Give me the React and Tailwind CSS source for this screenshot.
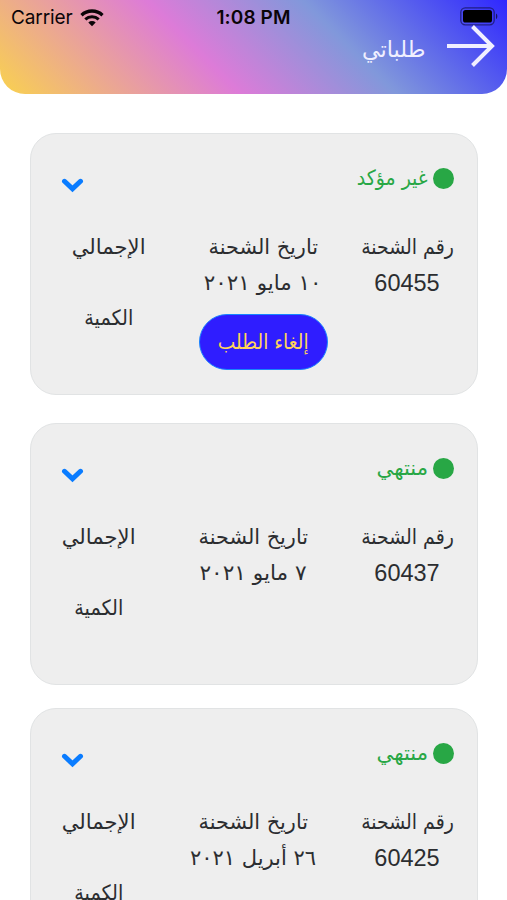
const AR = "font-['DejaVu_Sans',sans-serif]";

function Label({ children, width, scale, color = 'text-[#2b2d30]' }) {
  return (
    <div className={`${width} h-[36px] flex justify-center items-center`}>
      <span className={`${AR} text-[21px] ${color} ${scale} whitespace-nowrap leading-[36px]`}>{children}</span>
    </div>
  );
}

function Header() {
  return (
    <header className="h-[94px] rounded-b-[25px] overflow-hidden bg-[linear-gradient(45deg,#f9d24e_0%,#dd7bd8_40%,#8198db_66%,#2f27ff_100%)]">
      <div dir="ltr" className="h-[28px] pt-[5px] flex justify-between items-start text-[#0b0508] font-['Inter',sans-serif] leading-6">
        <div className="w-[170px] pl-[11px] flex items-center gap-[7px] text-[19px]">
          <span className="pt-px tracking-[-0.1px]">Carrier</span>
          <svg width="24" height="18" viewBox="0 0 24 18" fill="none" stroke="currentColor">
            <path d="M1.500 6.200a15.200 15.200 0 0 1 21 0" strokeWidth="3.300" />
            <path d="M5.300 10.300a9.800 9.800 0 0 1 13.400 0" strokeWidth="3" />
            <path d="M12 17.200l-3.700-3.800a5.400 5.400 0 0 1 7.400 0z" fill="currentColor" stroke="none" />
          </svg>
        </div>
        <div className="pt-px text-[19px] font-semibold whitespace-nowrap tracking-[0.1px]">1:08 PM</div>
        <div className="w-[170px] pr-[9px] pt-[2px] flex justify-end">
          <svg width="38" height="19" viewBox="0 0 38 19">
            <rect x="0.8" y="0.8" width="33.4" height="17" rx="4.5" fill="none" stroke="#17145f" strokeOpacity=".75" strokeWidth="1.3" />
            <rect x="3" y="3" width="29" height="12.6" rx="2.6" fill="#000" />
            <path d="M36 6.5c1.8.8 1.8 4.8 0 5.6z" fill="#17145f" />
          </svg>
        </div>
      </div>
      <div className="h-[44px] pr-[12px] flex justify-start items-start gap-[21px] text-[#f0efff]">
        <svg className="-mt-[4px]" width="49" height="44" viewBox="0 0 49 44" fill="none" stroke="currentColor" strokeWidth="4">
          <path d="M1 22h45" />
          <path d="M26.500 2.500L46 22L26.500 41.500" />
        </svg>
        <span className={`${AR} text-[23px] leading-[42px] scale-x-[.97] origin-right whitespace-nowrap`}>طلباتي</span>
      </div>
    </header>
  );
}

function OrderCard({ status, statusScale, number, date, dateScale, cancellable }) {
  return (
    <article className="h-[262px] shrink-0 rounded-[26px] border-[1.5px] border-[#e1e3e4] bg-[#eeeeee] pt-[29px]">
      <div className="h-[66px] pr-[23px] pl-[30px] flex justify-between items-start">
        <div className="flex items-center gap-[5px] h-[30px]">
          <span className="size-[21px] rounded-full bg-[#28a745]" />
          <span className={`${AR} text-[21px] leading-[30px] text-[#28a745] ${statusScale} origin-right whitespace-nowrap`}>{status}</span>
        </div>
        <svg className="mt-[15px]" width="23" height="16" viewBox="0 0 23 16" fill="none" stroke="#0a7cff" strokeWidth="5" strokeLinecap="round">
          <path d="M3.500 3.300l8 7.500l8-7.500" />
        </svg>
      </div>
      <div className={`flex pr-[22px] ${cancellable ? 'gap-[32px]' : 'gap-[42px]'}`}>
        <div className="w-[96px] shrink-0">
          <Label width="w-[96px]" scale="scale-x-90">رقم الشحنة</Label>
          <div className="h-[36px] flex justify-center items-center text-[23.5px] leading-[36px] text-[#2b2d30] font-['Liberation_Sans',sans-serif]">{number}</div>
        </div>
        <div className="w-[128px] shrink-0 flex flex-col items-center">
          <Label width="w-[128px]" scale="scale-x-[.99]">تاريخ الشحنة</Label>
          <Label width="w-[128px]" scale={dateScale}>{date}</Label>
          {cancellable && (
            <button className="mt-[13px] w-[129px] h-[56px] shrink-0 rounded-full border-[1.5px] border-[#1785ff] bg-[#2f1dff] flex items-center justify-center">
              <Label width="w-[100px]" scale="scale-x-[.89]" color="text-[#ffd55a]">إلغاء الطلب</Label>
            </button>
          )}
        </div>
        <div className={`w-[78px] shrink-0 ${cancellable ? 'mr-[19px]' : 'mr-[9px]'}`}>
          <Label width="w-[78px]" scale="scale-x-[1.01]">الإجمالي</Label>
          <div className="h-[35px]" />
          <Label width="w-[78px]" scale="scale-x-[.915]">الكمية</Label>
        </div>
      </div>
    </article>
  );
}

export default function App() {
  return (
    <div dir="rtl" className="w-[507px] h-[900px] overflow-hidden bg-white">
      <Header />
      <main className="pt-[39px] pr-[29px] pl-[30px] flex flex-col">
        <OrderCard status="غير مؤكد" statusScale="scale-x-[.9]" number="60455" date="١٠ مايو ٢٠٢١" dateScale="scale-x-[1.02]" cancellable />
        <div className="h-[28px] shrink-0" />
        <OrderCard status="منتهي" statusScale="scale-x-[1.01]" number="60437" date="٧ مايو ٢٠٢١" dateScale="scale-x-[1.03]" />
        <div className="h-[23px] shrink-0" />
        <OrderCard status="منتهي" statusScale="scale-x-[1.01]" number="60425" date="٢٦ أبريل ٢٠٢١" dateScale="scale-x-[1]" />
      </main>
    </div>
  );
}
